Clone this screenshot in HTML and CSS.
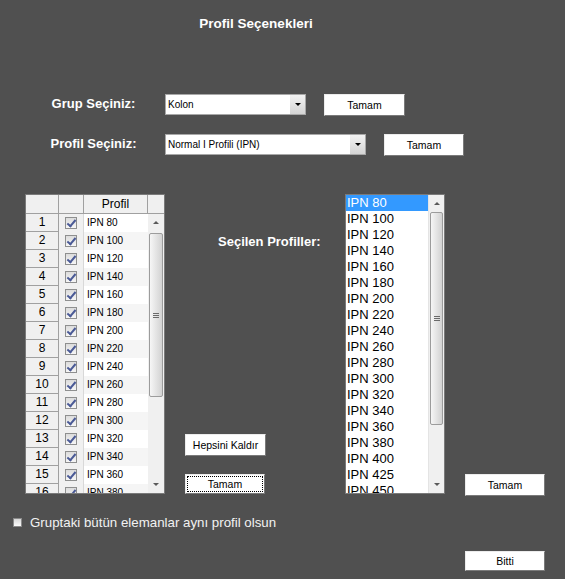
FILE: index.html
```html
<!DOCTYPE html>
<html>
<head>
    <title>Profil Seçenekleri</title>
    <meta charset="UTF-8">
    <link rel="stylesheet" href="styles.css">
</head>
<body>
    <div class="figure">
        <h1 class="title">Profil Seçenekleri</h1>
        <div class="choices">
            <div class="choice-row">
                <div class="choice-label">Grup Seçiniz:</div>
                <div class="popup popup-group"><span class="popup-text">Kolon</span><span class="popup-arrow"></span></div>
                <div class="button">Tamam</div>
            </div>
            <div class="choice-row">
                <div class="choice-label">Profil Seçiniz:</div>
                <div class="popup popup-profile"><span class="popup-text">Normal I Profili (IPN)</span><span class="popup-arrow"></span></div>
                <div class="button button-narrow">Tamam</div>
            </div>
        </div>
        <div class="workspace">
            <div class="profile-table">
                <div class="table-head">
                    <div class="head-cell"></div>
                    <div class="head-cell"></div>
                    <div class="head-cell">Profil</div>
                    <div class="head-cell head-corner"></div>
                </div>
                <div class="table-body">
                    <div class="table-rows">
                        <div class="table-row"><div class="num-cell">1</div><div class="check-cell"><span class="check"></span></div><div class="name-cell">IPN 80</div></div>
                        <div class="table-row"><div class="num-cell">2</div><div class="check-cell"><span class="check"></span></div><div class="name-cell">IPN 100</div></div>
                        <div class="table-row"><div class="num-cell">3</div><div class="check-cell"><span class="check"></span></div><div class="name-cell">IPN 120</div></div>
                        <div class="table-row"><div class="num-cell">4</div><div class="check-cell"><span class="check"></span></div><div class="name-cell">IPN 140</div></div>
                        <div class="table-row"><div class="num-cell">5</div><div class="check-cell"><span class="check"></span></div><div class="name-cell">IPN 160</div></div>
                        <div class="table-row"><div class="num-cell">6</div><div class="check-cell"><span class="check"></span></div><div class="name-cell">IPN 180</div></div>
                        <div class="table-row"><div class="num-cell">7</div><div class="check-cell"><span class="check"></span></div><div class="name-cell">IPN 200</div></div>
                        <div class="table-row"><div class="num-cell">8</div><div class="check-cell"><span class="check"></span></div><div class="name-cell">IPN 220</div></div>
                        <div class="table-row"><div class="num-cell">9</div><div class="check-cell"><span class="check"></span></div><div class="name-cell">IPN 240</div></div>
                        <div class="table-row"><div class="num-cell">10</div><div class="check-cell"><span class="check"></span></div><div class="name-cell">IPN 260</div></div>
                        <div class="table-row"><div class="num-cell">11</div><div class="check-cell"><span class="check"></span></div><div class="name-cell">IPN 280</div></div>
                        <div class="table-row"><div class="num-cell">12</div><div class="check-cell"><span class="check"></span></div><div class="name-cell">IPN 300</div></div>
                        <div class="table-row"><div class="num-cell">13</div><div class="check-cell"><span class="check"></span></div><div class="name-cell">IPN 320</div></div>
                        <div class="table-row"><div class="num-cell">14</div><div class="check-cell"><span class="check"></span></div><div class="name-cell">IPN 340</div></div>
                        <div class="table-row"><div class="num-cell">15</div><div class="check-cell"><span class="check"></span></div><div class="name-cell">IPN 360</div></div>
                        <div class="table-row"><div class="num-cell">16</div><div class="check-cell"><span class="check"></span></div><div class="name-cell">IPN 380</div></div>
                    </div>
                    <div class="scrollbar">
                        <div class="scroll-arrow scroll-up"></div>
                        <div class="scroll-track"><div class="scroll-thumb table-thumb"><span class="grip"></span></div></div>
                        <div class="scroll-arrow scroll-down"></div>
                    </div>
                </div>
            </div>
            <div class="selection-panel">
                <div class="panel-label">Seçilen Profiller:</div>
                <div class="panel-actions">
                    <div class="button">Hepsini Kaldır</div>
                    <div class="button button-narrow button-short button-focus">Tamam</div>
                </div>
            </div>
            <div class="selected-list">
                <div class="list-items">
                    <div class="list-item selected">IPN 80</div>
                    <div class="list-item">IPN 100</div>
                    <div class="list-item">IPN 120</div>
                    <div class="list-item">IPN 140</div>
                    <div class="list-item">IPN 160</div>
                    <div class="list-item">IPN 180</div>
                    <div class="list-item">IPN 200</div>
                    <div class="list-item">IPN 220</div>
                    <div class="list-item">IPN 240</div>
                    <div class="list-item">IPN 260</div>
                    <div class="list-item">IPN 280</div>
                    <div class="list-item">IPN 300</div>
                    <div class="list-item">IPN 320</div>
                    <div class="list-item">IPN 340</div>
                    <div class="list-item">IPN 360</div>
                    <div class="list-item">IPN 380</div>
                    <div class="list-item">IPN 400</div>
                    <div class="list-item">IPN 425</div>
                    <div class="list-item">IPN 450</div>
                </div>
                <div class="scrollbar list-scrollbar">
                    <div class="scroll-arrow scroll-up"></div>
                    <div class="scroll-track"><div class="scroll-thumb list-thumb"><span class="grip"></span></div></div>
                    <div class="scroll-arrow scroll-down"></div>
                </div>
            </div>
            <div class="side-actions">
                <div class="button button-narrow">Tamam</div>
            </div>
        </div>
        <div class="same-profile"><span class="box"></span>Gruptaki bütün elemanlar aynı profil olsun</div>
        <div class="finish-row">
            <div class="button button-narrow button-short">Bitti</div>
        </div>
    </div>
</body>
</html>
```

FILE: styles.css
```css
html {
    font-family: "Liberation Sans", Arial, sans-serif;
}

body {
    margin: 0;
    background-color: #505050;
}

.figure {
    width: 565px;
    height: 579px;
    background-color: #505050;
    overflow: hidden;
}

.title {
    margin: 0;
    padding: 16px 53px 0 0;
    font-size: 13.5px;
    line-height: 16px;
    text-align: center;
    color: white;
}

/* group / profile pickers */

.choices {
    margin-top: 62px;
}

.choice-row {
    display: flex;
    align-items: flex-start;
    height: 22px;
}

.choice-row + .choice-row {
    margin-top: 18px;
}

.choice-label {
    box-sizing: border-box;
    width: 165px;
    padding-left: 22px;
    text-align: center;
    color: white;
    font-weight: bold;
    font-size: 13px;
    line-height: 20px;
}

.popup {
    box-sizing: border-box;
    display: flex;
    height: 21px;
    margin-right: 18px;
    background-color: white;
    border: 1px solid #a8a8a8;
}

.popup-group {
    width: 141px;
}

.popup-profile {
    width: 201px;
}

.popup-text {
    flex: 1;
    padding-left: 2px;
    font-size: 10px;
    line-height: 19px;
}

.popup-arrow {
    width: 15px;
    display: flex;
    align-items: center;
    justify-content: center;
    background: linear-gradient(#f2f2f2, #d4d4d4);
}

.popup-arrow::before {
    content: "";
    border-left: 3px solid transparent;
    border-right: 3px solid transparent;
    border-top: 3px solid #000;
}

.button {
    box-sizing: border-box;
    width: 81px;
    height: 22px;
    background-color: white;
    border: 1px solid;
    border-color: #ececec #7a7a7a #7a7a7a #ececec;
    font-size: 10.5px;
    line-height: 20px;
    text-align: center;
    color: black;
}

.button-narrow {
    width: 80px;
}

.button-short {
    height: 20px;
    line-height: 18px;
}

.button-focus {
    outline: 1px dotted #000;
    outline-offset: -3px;
}

/* table with the profiles of the group */

.workspace {
    display: flex;
    height: 300px;
    margin-top: 38px;
}

.profile-table {
    box-sizing: border-box;
    width: 140px;
    height: 300px;
    margin-left: 25px;
    display: flex;
    flex-direction: column;
    border: 1px solid #7a7a7a;
    background-color: #f0f0f0;
}

.table-head {
    display: grid;
    grid-template-columns: 33px 25px 64px 16px;
    height: 18px;
    border-bottom: 1px solid #a0a0a0;
}

.head-cell {
    border-right: 1px solid #a0a0a0;
    font-size: 12px;
    line-height: 18px;
    text-align: center;
}

.head-corner {
    border-right: none;
}

.table-body {
    flex: 1;
    display: flex;
    overflow: hidden;
}

.table-rows {
    width: 122px;
    overflow: hidden;
}

.table-row {
    display: grid;
    grid-template-columns: 33px 25px 64px;
    height: 18px;
}

.num-cell {
    box-sizing: border-box;
    border-right: 1px solid #a0a0a0;
    border-bottom: 1px solid #a0a0a0;
    font-size: 12px;
    line-height: 17px;
    text-align: center;
}

.check-cell {
    display: flex;
    align-items: center;
    justify-content: center;
    border-right: 1px solid #d8d8d8;
}

.check {
    position: relative;
    box-sizing: border-box;
    width: 12px;
    height: 12px;
    border: 1px solid #8e8f8f;
    background: linear-gradient(#dcdcdc, #f6f6f6);
}

.check::after {
    content: "";
    position: absolute;
    left: 3px;
    top: 0;
    width: 3px;
    height: 7px;
    border-right: 2px solid #4a5a96;
    border-bottom: 2px solid #4a5a96;
    transform: rotate(40deg);
}

.name-cell {
    padding-left: 3px;
    font-size: 10px;
    line-height: 18px;
    background-color: white;
}

.table-row:nth-child(even) .name-cell {
    background-color: #f5f5f5;
}

/* scrollbars */

.scrollbar {
    box-sizing: border-box;
    width: 16px;
    display: flex;
    flex-direction: column;
    padding: 0 1px;
    background-color: #f0f0f0;
}

.list-scrollbar {
    width: 16px;
    border-left: 1px solid #e4e4e4;
}

.scroll-arrow {
    height: 17px;
    display: flex;
    align-items: center;
    justify-content: center;
}

.scroll-up::before {
    content: "";
    border-left: 3px solid transparent;
    border-right: 3px solid transparent;
    border-bottom: 3px solid #5a5a5a;
}

.scroll-down::before {
    content: "";
    border-left: 3px solid transparent;
    border-right: 3px solid transparent;
    border-top: 3px solid #5a5a5a;
}

.scroll-track {
    flex: 1;
}

.scroll-thumb {
    box-sizing: border-box;
    display: flex;
    align-items: center;
    justify-content: center;
    border: 1px solid #9c9c9c;
    border-radius: 2px;
    background: linear-gradient(to right, #f6f6f6, #d2d2d2);
}

.table-thumb {
    margin-top: 2px;
    height: 164px;
}

.list-thumb {
    height: 213px;
}

.grip {
    width: 6px;
    height: 5px;
    background: repeating-linear-gradient(#6a6a6a 0 1px, transparent 1px 2px);
}

/* middle column */

.selection-panel {
    width: 180px;
    display: flex;
    flex-direction: column;
}

.panel-label {
    margin: 40px 0 0 53px;
    font-size: 13px;
    font-weight: bold;
    line-height: 16px;
    color: white;
}

.panel-actions {
    margin-top: auto;
    padding-left: 20px;
    display: flex;
    flex-direction: column;
    gap: 18px;
}

/* chosen profiles */

.selected-list {
    box-sizing: border-box;
    width: 100px;
    height: 300px;
    display: flex;
    border: 1px solid #7a7a7a;
    background-color: white;
}

.list-items {
    flex: 1;
    overflow: hidden;
    font-size: 13px;
    line-height: 16px;
}

.list-item {
    padding-left: 1px;
}

.selected {
    background-color: #3399ff;
    color: white;
}

.side-actions {
    padding: 280px 0 0 20px;
}

/* bottom */

.same-profile {
    display: flex;
    align-items: center;
    height: 16px;
    margin-top: 20px;
    padding-left: 13px;
    font-size: 13.3px;
    color: #f2f2f2;
}

.box {
    box-sizing: border-box;
    width: 9px;
    height: 9px;
    margin-right: 8px;
    border: 1px solid #8a8a8a;
    background: linear-gradient(#d8d8d8, #fafafa);
}

.finish-row {
    margin-top: 21px;
    padding-left: 465px;
}
```
